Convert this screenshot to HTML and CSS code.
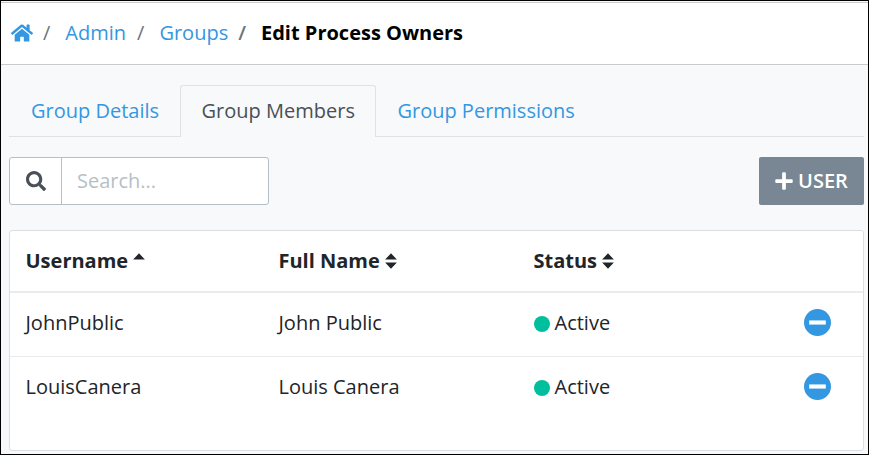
FILE: index.html
```html
<!DOCTYPE html>
<html lang="en">
<head>
<meta charset="utf-8">
<title>Edit Process Owners</title>
<link rel="stylesheet" href="styles.css">
</head>
<body>
<div class="frame">
  <nav class="breadcrumb">
    <a class="home" href="#" aria-label="Home"><svg viewBox="0 0 576 512"><path d="M280.37 148.26L96 300.11V464a16 16 0 0 0 16 16l112.06-.29a16 16 0 0 0 15.92-16V368a16 16 0 0 1 16-16h64a16 16 0 0 1 16 16v95.64a16 16 0 0 0 16 16.05L464 480a16 16 0 0 0 16-16V300L295.67 148.26a12.19 12.19 0 0 0-15.3 0zM571.6 251.47L488 182.56V44.05a12 12 0 0 0-12-12h-56a12 12 0 0 0-12 12v72.61L318.47 43a48 48 0 0 0-61 0L4.34 251.47a12 12 0 0 0-1.6 16.9l25.5 31A12 12 0 0 0 45.15 301l235.22-193.74a12.19 12.19 0 0 1 15.3 0L530.9 301a12 12 0 0 0 16.9-1.6l25.5-31a12 12 0 0 0-1.7-16.93z"/></svg></a>
    <span class="slash s1">/</span>
    <a class="admin" href="#">Admin</a>
    <span class="slash s2">/</span>
    <a class="groups" href="#">Groups</a>
    <span class="slash s3">/</span>
    <span class="current">Edit Process Owners</span>
  </nav>
  <main>
    <div class="tabs">
      <a class="tab details" href="#">Group Details</a>
      <a class="tab active" href="#">Group Members</a>
      <a class="tab permissions" href="#">Group Permissions</a>
    </div>
    <div class="toolbar">
      <div class="search">
        <span class="search-icon"><svg viewBox="0 0 512 512"><path d="M505 442.7L405.3 343c-4.500-4.500-10.600-7-17-7H372c27.600-35.300 44-79.700 44-128C416 93.100 322.900 0 208 0S0 93.100 0 208s93.100 208 208 208c48.300 0 92.700-16.400 128-44v16.300c0 6.400 2.500 12.500 7 17l99.700 99.700c9.400 9.400 24.600 9.400 33.900 0l28.300-28.300c9.400-9.400 9.400-24.600.1-34zM208 336c-70.700 0-128-57.200-128-128 0-70.700 57.200-128 128-128 70.700 0 128 57.200 128 128 0 70.700-57.200 128-128 128z"/></svg></span>
        <input type="text" placeholder="Search..." aria-label="Search">
      </div>
      <button class="add" type="button"><svg viewBox="0 0 448 512"><path d="M416 208H272V64c0-17.670-14.330-32-32-32h-32c-17.670 0-32 14.330-32 32v144H32c-17.670 0-32 14.330-32 32v32c0 17.670 14.330 32 32 32h144v144c0 17.670 14.330 32 32 32h32c17.670 0 32-14.330 32-32V304h144c17.670 0 32-14.330 32-32v-32c0-17.670-14.330-32-32-32z"/></svg><span>USER</span></button>
    </div>
    <div class="card">
      <div class="row head">
        <div><span class="username">Username</span><svg class="sort" viewBox="0 0 12 20"><path d="M6 2.300L11.900 8.600H.1z"/></svg></div>
        <div><span class="fullname">Full Name</span><svg class="sort" viewBox="0 0 12 20"><path d="M6 2.300L11.900 8.600H.1zM.1 11.400h11.800L6 17.700z"/></svg></div>
        <div><span class="status">Status</span><svg class="sort" viewBox="0 0 12 20"><path d="M6 2.300L11.900 8.600H.1zM.1 11.400h11.800L6 17.700z"/></svg></div>
        <div></div>
      </div>
      <div class="row">
        <div><span>JohnPublic</span></div>
        <div><span>John Public</span></div>
        <div><i class="dot"></i><span>Active</span></div>
        <div><svg class="minus" viewBox="0 0 26 26"><circle cx="13" cy="13" r="13"/><path d="M5 11h16v4H5z"/></svg></div>
      </div>
      <div class="row">
        <div><span>LouisCanera</span></div>
        <div><span>Louis Canera</span></div>
        <div><i class="dot"></i><span>Active</span></div>
        <div><svg class="minus" viewBox="0 0 26 26"><circle cx="13" cy="13" r="13"/><path d="M5 11h16v4H5z"/></svg></div>
      </div>
    </div>
  </main>
</div>
</body>
</html>
```

FILE: styles.css
```css
* { box-sizing: border-box; }
body {
  margin: 0;
  font: 400 20px/30px "Open Sans", sans-serif;
  color: #212529;
}
svg { display: block; fill: currentColor; flex: none; }
a { color: #3397e1; text-decoration: none; }
.frame {
  height: 455px;
  padding-top: 1px;
  border: 1px solid #000;
  background: #f7f9fb;
  overflow: hidden;
}
.breadcrumb {
  display: flex;
  align-items: center;
  height: 63px;
  padding: 0 0 2px 10px;
  background: #fff;
  border: solid #c9cccf;
  border-width: 1px 0;
}
.home svg { width: 22px; height: 20px; }
.slash { color: #6c757d; }
.s1 { margin: 0 15px 0 10px; }
.s2 { margin: 0 15px 0 11px; }
.s3 { margin: 0 15px 0 10px; font-weight: 600; }
.current { color: #000; font-weight: 700; }
main { padding: 20px 4px 0 8px; }
.tabs {
  display: flex;
  height: 52px;
  border-bottom: 1px solid #dee2e6;
}
.tab {
  height: 52px;
  margin-right: -1px;
  padding: 10px 21px 0;
  border: 1px solid transparent;
  border-bottom: 0;
  white-space: nowrap;
}
.tab.active {
  padding: 10px 20.5px 0;
  color: #495057;
  background: #f7f9fb;
  border-color: #dee2e6;
  border-radius: 3px 3px 0 0;
}
.toolbar {
  display: flex;
  justify-content: space-between;
  margin: 20px 0 25px;
}
.search {
  display: flex;
  width: 260px;
  height: 48px;
  background: #fff;
  border: 1px solid #b6bfc6;
  border-radius: 3px;
}
.search-icon {
  display: flex;
  align-items: center;
  justify-content: center;
  width: 52px;
  border-right: 1px solid #b6bfc6;
  color: #495057;
}
.search-icon svg { width: 20px; height: 20px; }
input {
  width: 200px;
  padding: 0 15px;
  border: 0;
  background: none;
  font: inherit;
}
input::placeholder { color: #b6bfc6; opacity: 1; }
.add {
  display: flex;
  align-items: center;
  justify-content: center;
  gap: 5px;
  width: 105px;
  height: 48px;
  padding: 0;
  border: 0;
  border-radius: 2px;
  background: #788793;
  color: #fff;
  font: 600 20px/30px "Open Sans", sans-serif;
}
.add svg { width: 18px; height: 20px; }
.card {
  height: 221px;
  background: #fff;
  border: 1px solid #dcdfe2;
  border-radius: 3px;
}
.row {
  display: grid;
  grid-template-columns: 253px 255px 270px 1fr;
  align-items: center;
  height: 63px;
  padding: 0 0 3px 15.5px;
}
.row > div { display: flex; align-items: center; white-space: nowrap; }
.row + .row + .row { height: 64px; border-top: 1px solid #e9ecef; }
.head { height: 62px; padding-bottom: 0; border-bottom: 2px solid #e9ecef; font-weight: 700; }
.sort { width: 12px; height: 20px; margin-left: 5px; }
.dot {
  width: 16px;
  height: 16px;
  margin: 1px 5px 0 0;
  border-radius: 50%;
  background: #00bf9c;
}
.minus { width: 27px; height: 27px; margin-bottom: 1px; color: #3397e1; }
.minus path { fill: #fff; }
```
